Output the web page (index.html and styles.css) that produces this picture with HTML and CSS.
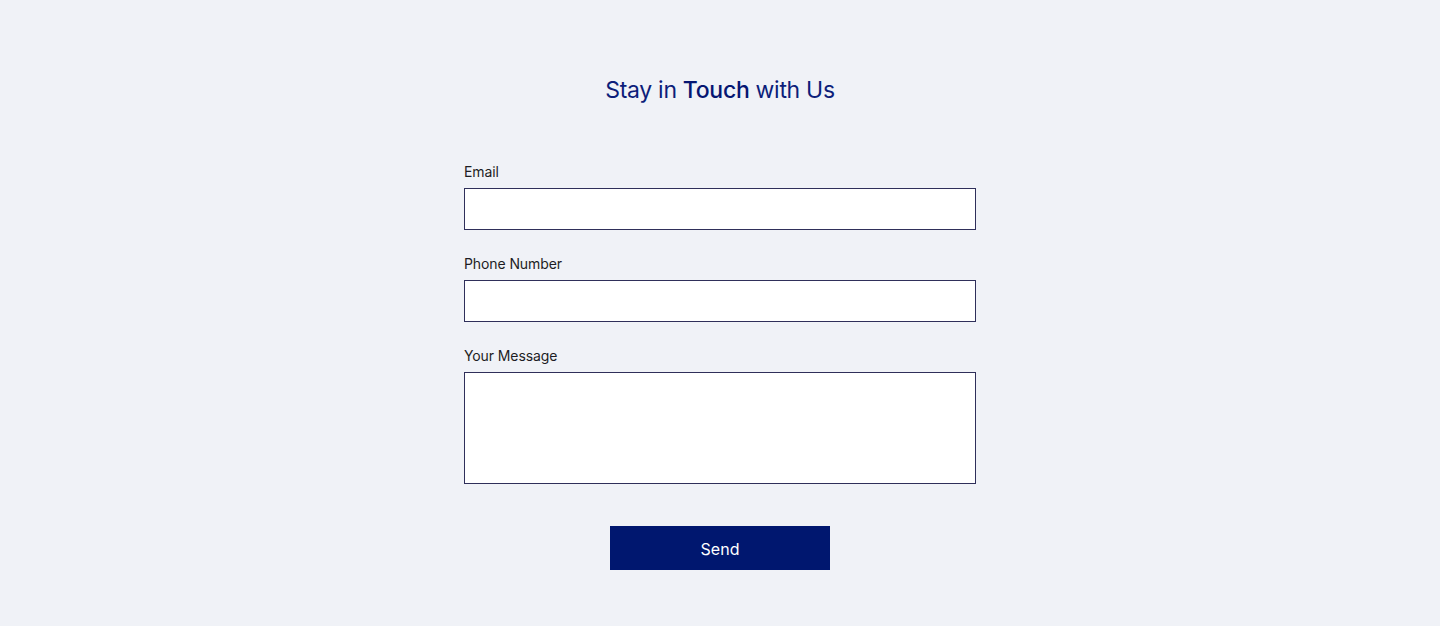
FILE: index.html
```html
<!DOCTYPE html>
<html>
<head>
<meta charset="utf-8">
<link rel="stylesheet" href="styles.css">
</head>
<body>
<main class="page">
  <h1 class="title">Stay in <strong>Touch</strong> with Us</h1>
  <form class="form">
    <div class="field">
      <label class="label" for="email">Email</label>
      <input class="input" id="email" type="email">
    </div>
    <div class="field">
      <label class="label" for="phone">Phone Number</label>
      <input class="input" id="phone" type="tel">
    </div>
    <div class="field">
      <label class="label" for="msg">Your Message</label>
      <textarea class="input textarea" id="msg"></textarea>
    </div>
    <div class="actions">
      <button class="button" type="button">Send</button>
    </div>
  </form>
</main>
</body>
</html>
```
FILE: styles.css
```css
html, body {
  margin: 0;
  padding: 0;
}
body {
  background: #f0f2f7;
  font-family: Inter, "Noto Sans", "Liberation Sans", sans-serif;
  color: #1a1a1a;
  height: 626px;
}
.page {
  display: flex;
  flex-direction: column;
  align-items: center;
  padding-top: 74px;
}
.title {
  margin: 0;
  font-size: 23px;
  line-height: 32px;
  font-weight: 400;
  color: #0d1e7a;
  letter-spacing: -0.3px;
}
.title strong {
  font-weight: 500;
  color: #061672;
}
.form {
  width: 512px;
  margin-top: 56px;
  display: flex;
  flex-direction: column;
  gap: 24px;
}
.field {
  display: flex;
  flex-direction: column;
  gap: 6px;
}
.label {
  font-size: 14px;
  line-height: 20px;
  color: #1d1d24;
  letter-spacing: -0.1px;
}
.input {
  box-sizing: border-box;
  width: 512px;
  height: 42px;
  margin: 0;
  border: 1px solid #2f2f5a;
  border-radius: 0;
  background: #ffffff;
  font: inherit;
  padding: 0 12px;
}
.textarea {
  height: 112px;
  resize: none;
  display: block;
}
.actions {
  display: flex;
  justify-content: center;
  margin-top: 18px;
}
.button {
  width: 220px;
  height: 44px;
  border: none;
  background: #00176f;
  color: #ffffff;
  font-family: inherit;
  font-size: 16px;
  line-height: 20px;
  padding: 13px 0 11px;
  cursor: pointer;
}
```
